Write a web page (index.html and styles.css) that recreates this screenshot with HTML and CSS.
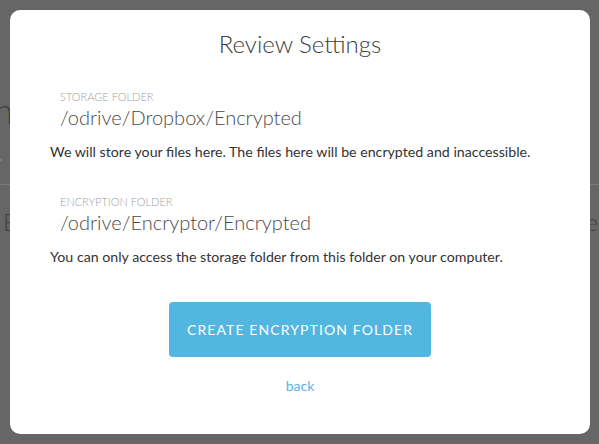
FILE: index.html
```html
<!DOCTYPE html>
<html>
<head>
<meta charset="utf-8">
<link rel="stylesheet" href="styles.css">
</head>
<body>
<div class="page">
  <div class="page-title">Encryption</div>
  <div class="page-dot"></div>
  <div class="page-rule"></div>
  <div class="page-row">
    <span>Encryptor</span>
    <span>Type</span>
  </div>
</div>
<div class="overlay">
  <div class="modal">
    <h1 class="modal-title">Review Settings</h1>
    <div class="field">
      <div class="field-label">STORAGE FOLDER</div>
      <div class="field-value">/odrive/Dropbox/Encrypted</div>
    </div>
    <p class="field-note">We will store your files here. The files here will be encrypted and inaccessible.</p>
    <div class="field field-second">
      <div class="field-label">ENCRYPTION FOLDER</div>
      <div class="field-value">/odrive/Encryptor/Encrypted</div>
    </div>
    <p class="field-note">You can only access the storage folder from this folder on your computer.</p>
    <div class="actions">
      <button class="primary-btn">CREATE ENCRYPTION FOLDER</button>
      <a class="back-link" href="#">back</a>
    </div>
  </div>
</div>
</body>
</html>
```
FILE: styles.css
```css
* { box-sizing: border-box; }
html, body {
  margin: 0;
  padding: 0;
  width: 599px;
  height: 444px;
  overflow: hidden;
}
body {
  background: #666666;
  font-family: Lato, "Open Sans", sans-serif;
  position: relative;
}
.page {
  width: 599px;
  height: 444px;
  padding-top: 88px;
  color: #3f3f3f;
}
.page-title {
  font-size: 36px;
  font-weight: 300;
  line-height: 44px;
  margin-left: -155px;
  white-space: nowrap;
}
.page-dot {
  width: 2px;
  height: 2px;
  margin-top: 27px;
  background: #5c8a8a;
}
.page-rule {
  margin-top: 23px;
  height: 1px;
  background: #7a7a7a;
}
.page-row {
  display: flex;
  justify-content: space-between;
  margin: 22px 1px 0 3px;
  font-size: 24px;
  font-weight: 300;
  line-height: 30px;
}
.overlay {
  position: absolute;
  inset: 0;
  padding: 10px 9px 10px 10px;
}
.modal {
  width: 580px;
  height: 424px;
  background: #ffffff;
  border-radius: 10px;
  padding: 20px 40px 0 40px;
}
.modal-title {
  margin: 0;
  text-align: center;
  font-size: 24px;
  font-weight: 300;
  line-height: 28px;
  color: #3c3c3c;
}
.field {
  margin-top: 32px;
  padding-left: 10px;
}
.field-second {
  margin-top: 35px;
}
.field-label {
  font-size: 11px;
  font-weight: 300;
  line-height: 13px;
  color: #a0a0a0;
}
.field-value {
  margin-top: 2px;
  font-size: 20px;
  font-weight: 300;
  line-height: 24px;
  color: #4a4a4a;
}
.field-note {
  margin: 14px 0 0 0;
  font-size: 14.2px;
  line-height: 17px;
  color: #333333;
}
.actions {
  display: flex;
  flex-direction: column;
  align-items: center;
  margin-top: 37px;
}
.primary-btn {
  width: 262px;
  height: 55px;
  border: none;
  border-radius: 4px;
  background: #53b6e0;
  color: #ffffff;
  font-family: Lato, "Open Sans", sans-serif;
  font-size: 14px;
  letter-spacing: 1.1px;
  padding: 0;
}
.back-link {
  margin-top: 20px;
  font-size: 14px;
  line-height: 17px;
  color: #5ab5df;
  text-decoration: none;
}
```
